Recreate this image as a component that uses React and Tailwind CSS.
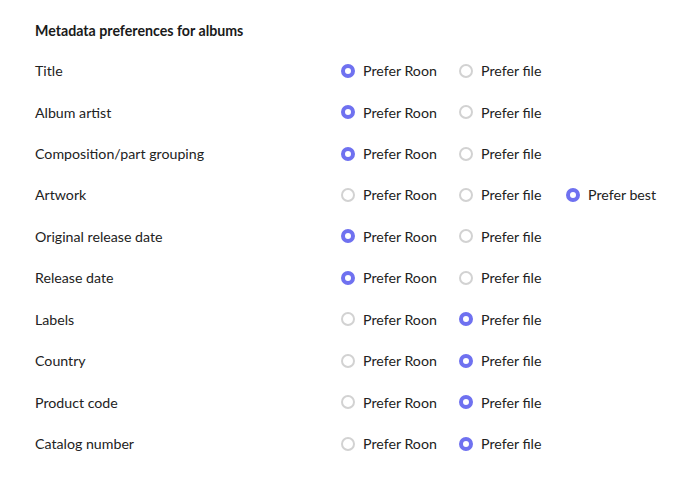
import React from "react";

const rows = [
    { label: "Title", value: "roon" },
    { label: "Album artist", value: "roon" },
    { label: "Composition/part grouping", value: "roon" },
    { label: "Artwork", value: "best", best: true },
    { label: "Original release date", value: "roon" },
    { label: "Release date", value: "roon" },
    { label: "Labels", value: "file" },
    { label: "Country", value: "file" },
    { label: "Product code", value: "file" },
    { label: "Catalog number", value: "file" },
];

function Radio({ checked, text, width }) {
    return (
        <div className={`flex items-center ${width}`}>
            {checked ? (
                <span className="w-[14px] h-[14px] rounded-full border-[4.5px] border-[#6f71f0] bg-white shrink-0" />
            ) : (
                <span className="w-[14px] h-[14px] rounded-full border-2 border-[#d2d2d2] bg-white shrink-0" />
            )}
            <span className="ml-[8px] text-[14.2px] text-[#222]">{text}</span>
        </div>
    );
}

export default function App() {
    return (
        <div className="w-[690px] h-[484px] bg-white pl-[35px] pt-[22px]" style={{ fontFamily: "Lato, 'Open Sans', sans-serif" }}>
            <h2 className="text-[14.2px] font-bold text-[#1a1a1a] h-[18px] leading-[18px]">Metadata preferences for albums</h2>
            <div className="mt-[10px] flex flex-col">
                {rows.map((row) => (
                    <div key={row.label} className="flex items-center h-[41.45px]">
                        <div className="w-[306px] text-[14.2px] text-[#222]">{row.label}</div>
                        <Radio checked={row.value === "roon"} text="Prefer Roon" width="w-[118px]" />
                        <Radio checked={row.value === "file"} text="Prefer file" width="w-[107px]" />
                        {row.best && <Radio checked={row.value === "best"} text="Prefer best" width="" />}
                    </div>
                ))}
            </div>
        </div>
    );
}
